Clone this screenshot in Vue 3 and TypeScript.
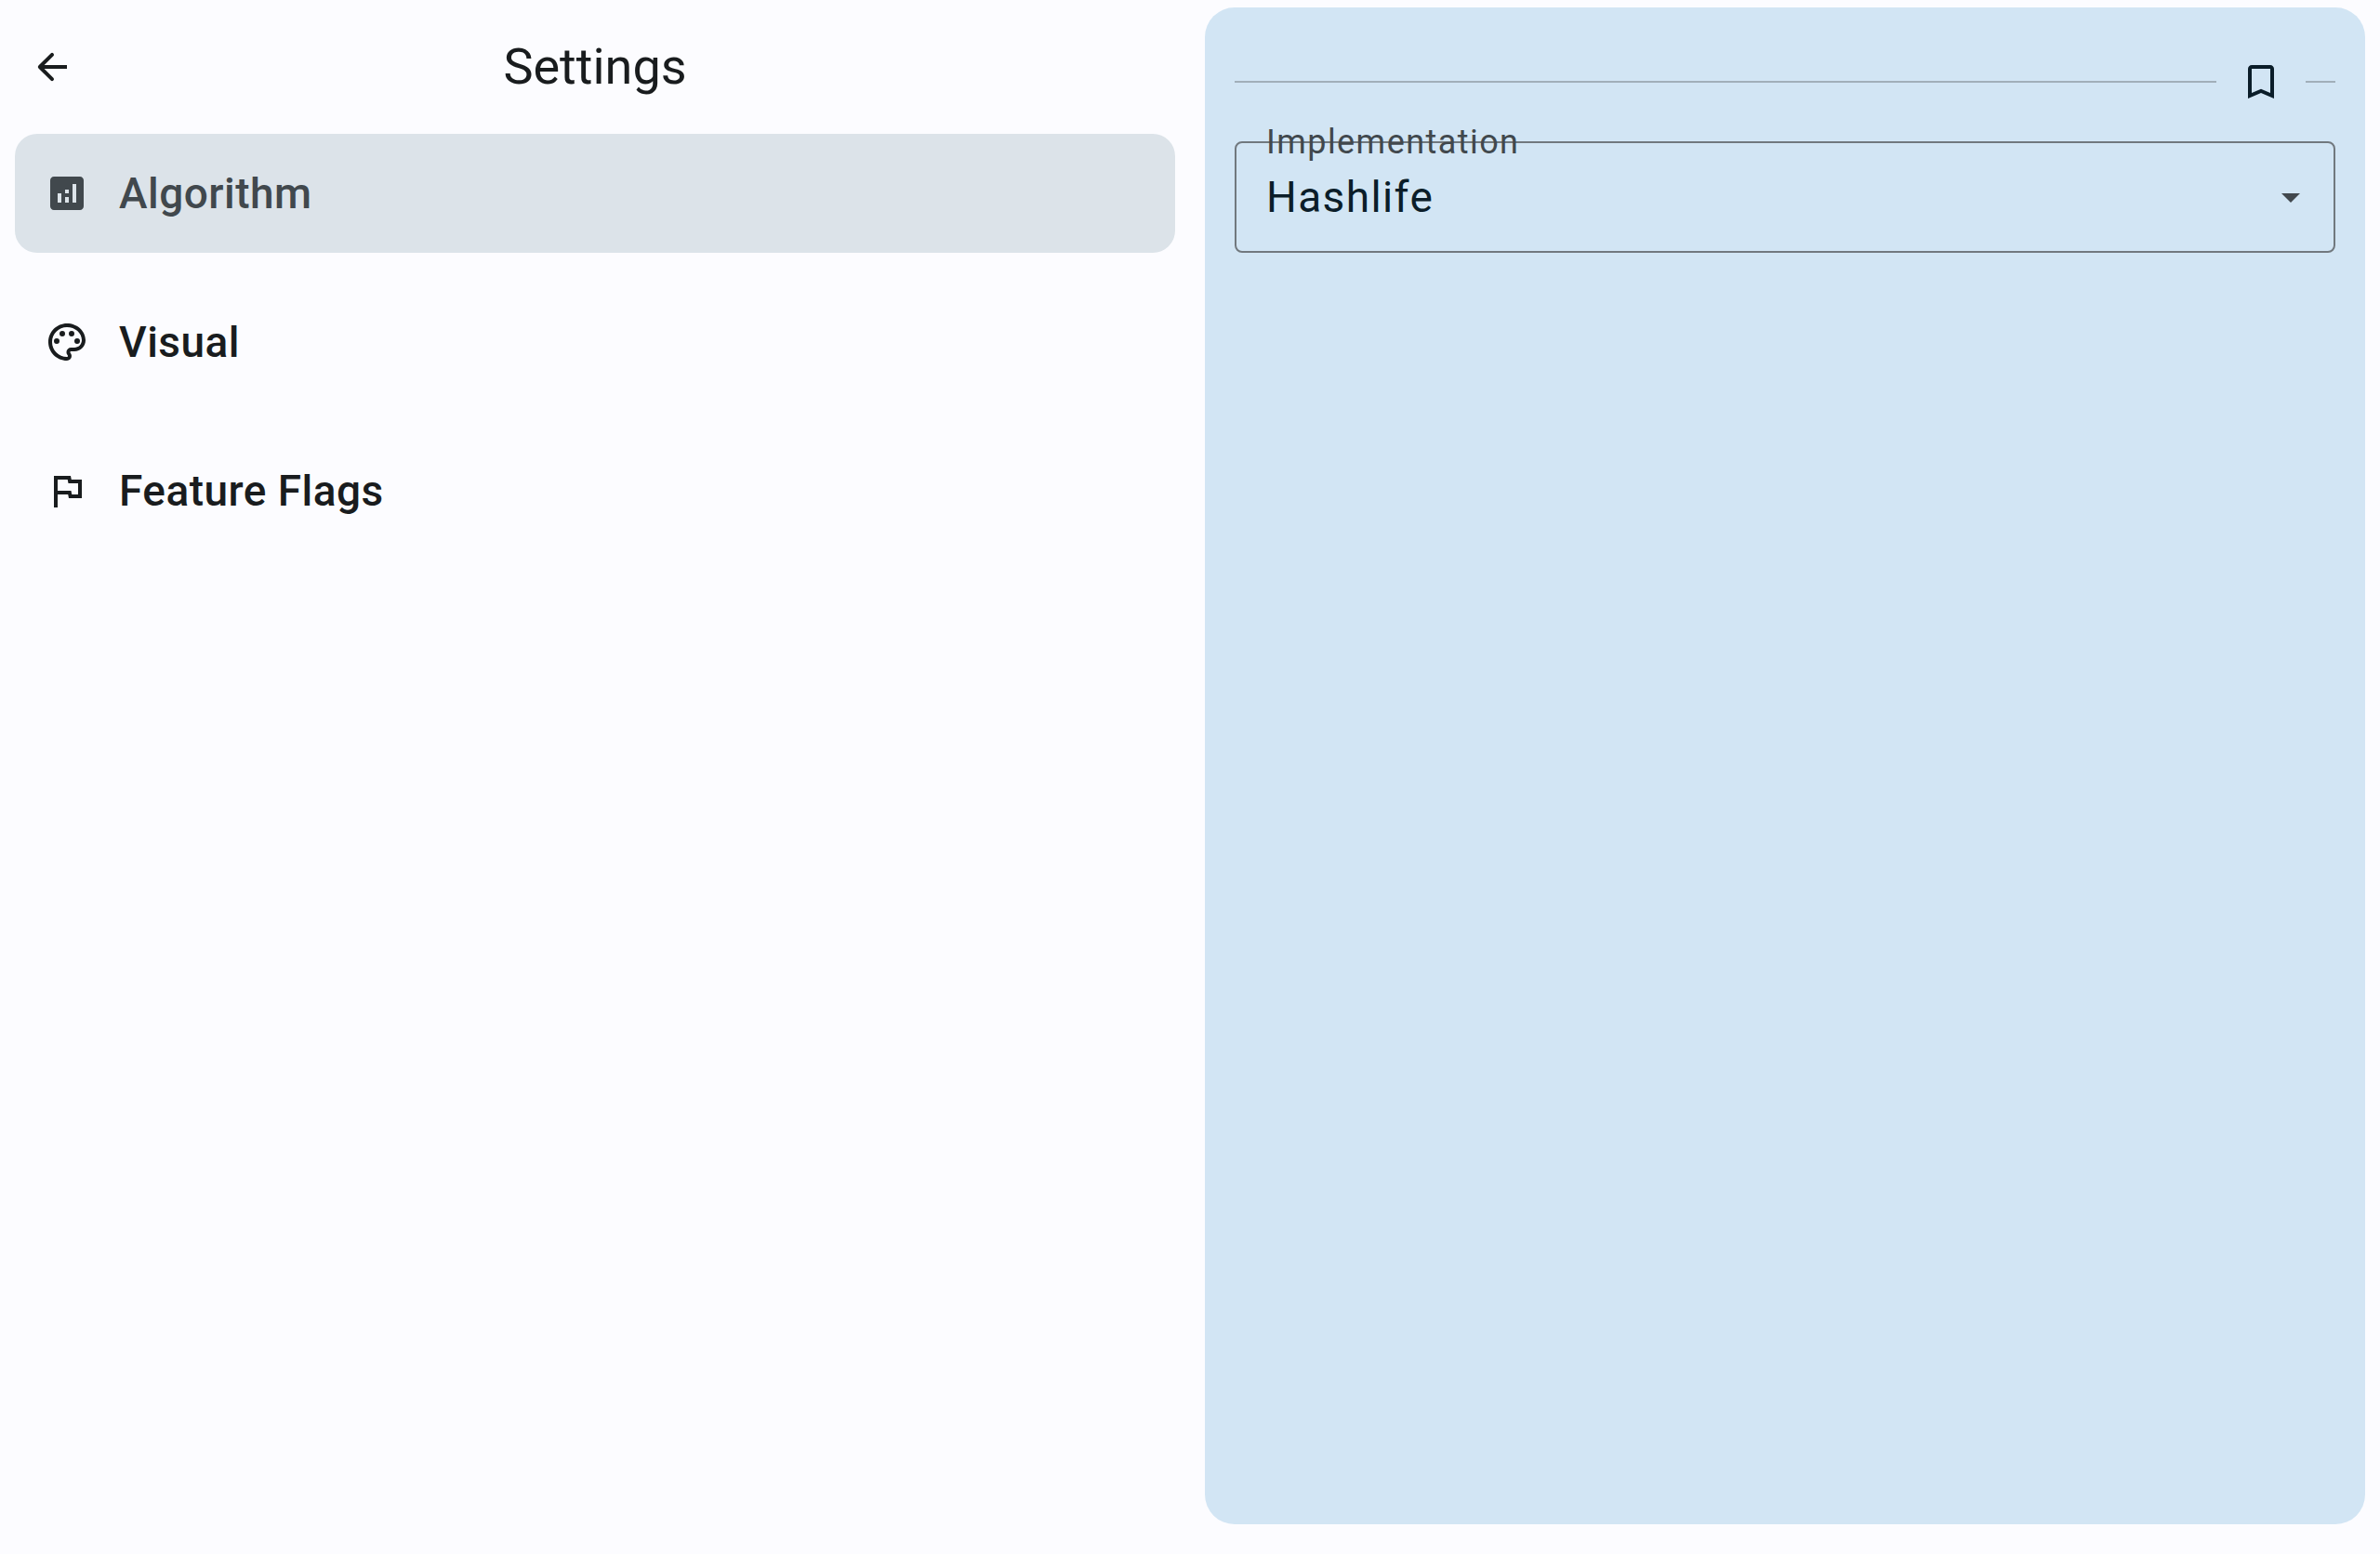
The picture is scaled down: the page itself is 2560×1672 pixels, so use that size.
<script setup lang="ts">
import { ref } from 'vue'

interface Category {
  id: string
  label: string
  icon: string
}

const categories: Category[] = [
  {
    id: 'algorithm',
    label: 'Algorithm',
    icon: 'M19 3H5c-1.1 0-2 .9-2 2v14c0 1.1.9 2 2 2h14c1.1 0 2-.9 2-2V5c0-1.1-.9-2-2-2zM9 17H7v-5h2v5zm4 0h-2v-3h2v3zm0-5h-2v-2h2v2zm4 5h-2V7h2v10z',
  },
  {
    id: 'visual',
    label: 'Visual',
    icon: 'M12 22C6.49 22 2 17.51 2 12S6.49 2 12 2s10 4.04 10 9c0 3.31-2.69 6-6 6h-1.77c-.28 0-.5.22-.5.5 0 .12.05.23.13.33.41.47.64 1.06.64 1.67A2.5 2.5 0 0 1 12 22zm0-18c-4.41 0-8 3.59-8 8s3.59 8 8 8c.28 0 .5-.22.5-.5a.54.54 0 0 0-.14-.35c-.41-.46-.63-1.05-.63-1.65a2.5 2.5 0 0 1 2.5-2.5H16c2.21 0 4-1.79 4-4 0-3.86-3.59-7-8-7zM6.5 10a1.5 1.5 0 1 0 0 3a1.5 1.5 0 1 0 0-3zM9.5 6a1.5 1.5 0 1 0 0 3a1.5 1.5 0 1 0 0-3zM14.5 6a1.5 1.5 0 1 0 0 3a1.5 1.5 0 1 0 0-3zM17.5 10a1.5 1.5 0 1 0 0 3a1.5 1.5 0 1 0 0-3z',
  },
  {
    id: 'flags',
    label: 'Feature Flags',
    icon: 'M12.36 6l.4 2H18v6h-3.36l-.4-2H7V6h5.36M14 4H5v17h2v-7h5.6l.4 2h7V6h-5.6L14 4z',
  },
]

const selected = ref('algorithm')
const implementation = ref('Hashlife')
</script>

<template>
  <div class="settings">
    <section class="list-pane">
      <header class="top-bar">
        <button class="icon-button" type="button" aria-label="Back">
          <svg class="icon" viewBox="0 0 24 24" aria-hidden="true">
            <path d="M20 11H7.83l4.88-4.88c.39-.39.39-1.03 0-1.42a.996.996 0 0 0-1.41 0l-6.59 6.59a.996.996 0 0 0 0 1.41l6.59 6.59a.996.996 0 1 0 1.41-1.41L7.83 13H20v-2z" />
          </svg>
        </button>
        <h1 class="title">Settings</h1>
      </header>
      <nav class="categories">
        <button
          v-for="category in categories"
          :key="category.id"
          class="category"
          :class="{ selected: category.id === selected }"
          type="button"
          @click="selected = category.id"
        >
          <svg class="icon" viewBox="0 0 24 24" aria-hidden="true">
            <path :d="category.icon" />
          </svg>
          <span>{{ category.label }}</span>
        </button>
      </nav>
    </section>

    <section class="detail-pane">
      <div class="divider-row">
        <span class="line line-long"></span>
        <button class="icon-button" type="button" aria-label="Bookmark">
          <svg class="icon" viewBox="0 0 24 24" aria-hidden="true">
            <path d="M17 3H7c-1.1 0-2 .9-2 2v16l7-3 7 3V5c0-1.1-.9-2-2-2zm0 15l-5-2.18L7 18V5h10v13z" />
          </svg>
        </button>
        <span class="line line-short"></span>
      </div>
      <div class="field">
        <label class="field-label" for="implementation">Implementation</label>
        <select id="implementation" v-model="implementation" class="field-select">
          <option>Hashlife</option>
        </select>
        <svg class="icon field-arrow" viewBox="0 0 24 24" aria-hidden="true">
          <path d="M7 10l5 5 5-5z" />
        </svg>
      </div>
    </section>
  </div>
</template>

<style>
body {
  background: #fcfcff;
}
</style>

<style scoped>
.settings {
  box-sizing: border-box;
  min-height: 100vh;
  display: grid;
  grid-template-columns: 1fr 1fr;
  background: #fcfcff;
  color: #191c1e;
  font-family: Roboto, sans-serif;
}

.icon {
  width: 48px;
  height: 48px;
  flex: none;
  fill: currentColor;
}

.icon-button {
  display: flex;
  align-items: center;
  justify-content: center;
  width: 96px;
  height: 96px;
  padding: 0;
  border: 0;
  border-radius: 48px;
  background: none;
  color: inherit;
}

.top-bar {
  display: grid;
  grid-template-columns: 1fr auto 1fr;
  align-items: center;
  height: 144px;
  padding: 0 8px;
}

.title {
  margin: 0;
  font-size: 54px;
  line-height: 64px;
  font-weight: 400;
}

.categories {
  display: flex;
  flex-direction: column;
  gap: 32px;
  padding: 0 16px;
}

.category {
  display: flex;
  align-items: center;
  gap: 32px;
  height: 128px;
  padding: 0 32px;
  border: 0;
  border-radius: 24px;
  background: none;
  color: inherit;
  font-family: inherit;
  font-size: 46px;
  line-height: 56px;
  font-weight: 500;
  letter-spacing: 0.01em;
  text-align: left;
}

.category.selected {
  background: #dce3e9;
  color: #41484d;
}

.detail-pane {
  margin: 8px 16px 32px;
  padding: 32px;
  border-radius: 32px;
  background: #d2e5f4;
  color: #0b1d29;
}

.divider-row {
  display: flex;
  align-items: center;
}

.line {
  height: 2px;
  background: #a1afb9;
}

.line-long {
  flex: 1;
}

.line-short {
  width: 32px;
}

.field {
  position: relative;
  margin-top: 16px;
}

.field-label {
  position: absolute;
  top: -21px;
  left: 34px;
  color: #41484d;
  font-size: 36px;
  line-height: 44px;
  letter-spacing: 0.04em;
}

.field-select {
  display: block;
  box-sizing: border-box;
  width: 100%;
  height: 120px;
  padding: 0 96px 0 32px;
  border: 2px solid #71787e;
  border-radius: 8px;
  appearance: none;
  background: none;
  color: inherit;
  font-family: inherit;
  font-size: 46px;
  line-height: 56px;
  letter-spacing: 0.03em;
}

.field-arrow {
  position: absolute;
  top: 36px;
  right: 24px;
  color: #41484d;
  pointer-events: none;
}
</style>
